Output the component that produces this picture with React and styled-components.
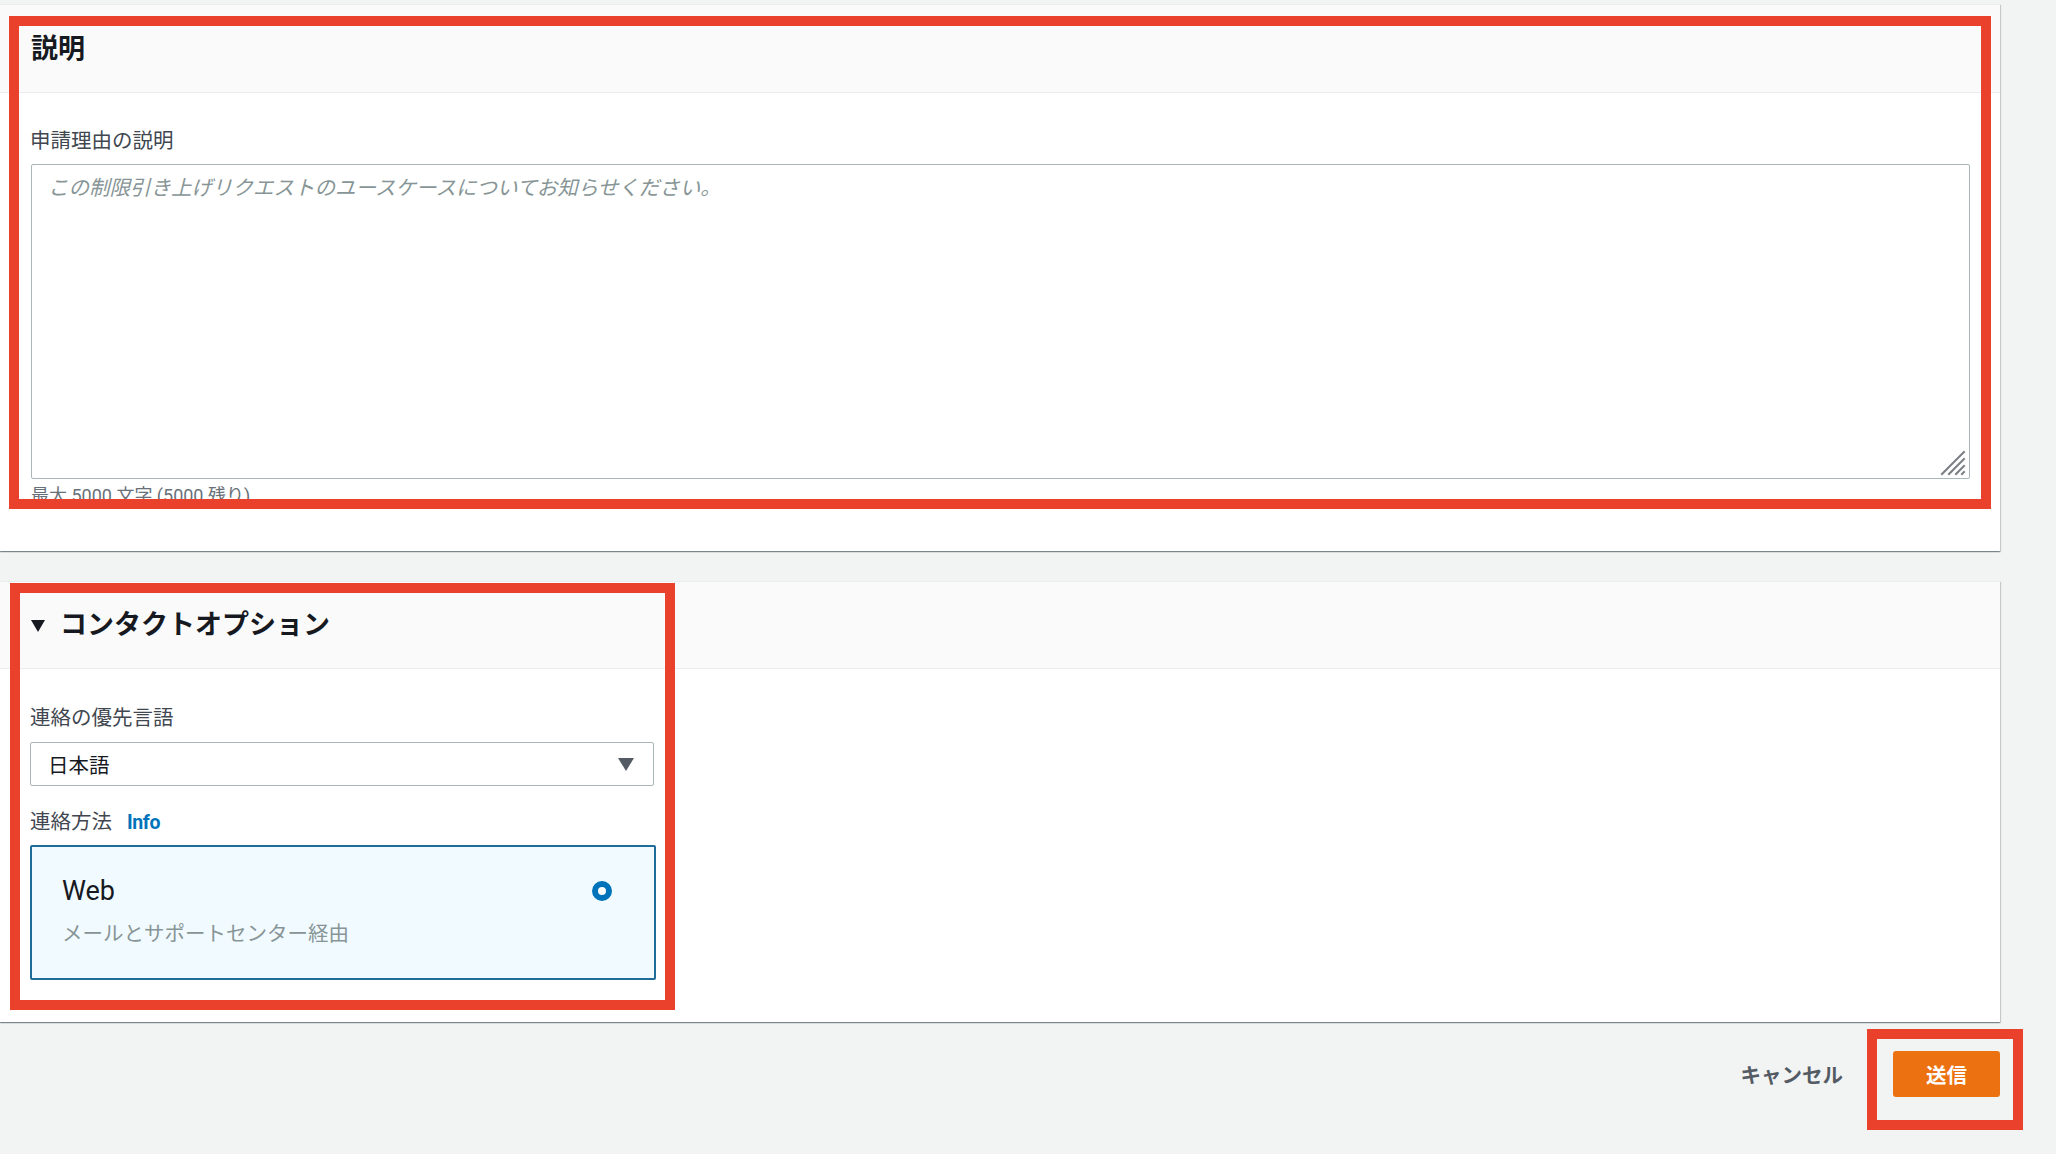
import styled, { createGlobalStyle } from 'styled-components';

const GlobalStyle = createGlobalStyle`
  html, body {
    margin: 0;
    padding: 0;
    background: #f2f3f3;
  }
  body {
    font-family: Roboto, "Noto Sans CJK JP", sans-serif;
    color: #16191f;
    -webkit-font-smoothing: antialiased;
  }
  * { box-sizing: border-box; }
`;

const Page = styled.div`
  position: relative;
  width: 2000px;
  min-height: 1154px;
  padding-top: 4px;
`;

const Card = styled.section`
  background: #fff;
  margin-top: ${p => p.gap || 0}px;
  box-shadow: 0 1px 1px 0 rgba(0, 28, 36, 0.3), 1px 1px 1px 0 rgba(0, 28, 36, 0.15),
    -1px 1px 1px 0 rgba(0, 28, 36, 0.15);
  border-top: 1px solid #eaeded;
`;

const CardHeader = styled.header`
  height: ${p => p.h}px;
  display: flex;
  align-items: center;
  gap: 15px;
  padding-left: 31px;
  background: #fafafa;
  border-bottom: 1px solid #eaeded;
`;

const Heading = styled.h2`
  margin: 0;
  font-size: 27px;
  font-weight: 700;
  line-height: 32px;
  color: #16191f;
`;

const Caret = styled.span`
  width: 0;
  height: 0;
  border-left: 7px solid transparent;
  border-right: 7px solid transparent;
  border-top: 12px solid #16191f;
  margin-top: 2px;
`;

const CardBody = styled.div`
  padding: ${p => p.pt}px 31px ${p => p.pb}px 30px;
  display: flex;
  flex-direction: column;
`;

const Label = styled.label`
  display: flex;
  align-items: baseline;
  gap: 15px;
  font-size: 20.5px;
  line-height: 26px;
  color: #414750;
  margin-bottom: ${p => p.mb}px;
`;

const InfoLink = styled.a`
  font-family: Roboto, sans-serif;
  font-size: 19.5px;
  font-weight: 700;
  color: #0073bb;
  text-decoration: none;
  letter-spacing: -0.4px;
`;

const TextAreaWrap = styled.div`
  position: relative;
  margin-left: 1px;
`;

const TextArea = styled.textarea`
  display: block;
  width: calc(100% + 1px);
  height: 315px;
  padding: 10px 16px;
  border: 1px solid #aab7b8;
  border-radius: 2px;
  font-family: Roboto, "Noto Sans CJK JP", sans-serif;
  font-size: 20.5px;
  line-height: 26px;
  color: #16191f;
  resize: none;
  outline: none;
  &::placeholder {
    color: #879596;
    font-style: italic;
  }
`;

const Grip = styled.svg`
  position: absolute;
  right: 3px;
  bottom: 3px;
  pointer-events: none;
`;

const Constraint = styled.div`
  margin-top: 6px;
  margin-left: 1px;
  font-size: 18px;
  line-height: 22px;
  color: #687078;
`;

const Select = styled.div`
  width: 624px;
  height: 44px;
  display: flex;
  align-items: center;
  justify-content: space-between;
  padding: 0 19px 0 17px;
  border: 1px solid #aab7b8;
  border-radius: 2px;
  font-size: 20.5px;
  color: #16191f;
  margin-bottom: 23px;
`;

const Tile = styled.div`
  width: 626px;
  height: 135px;
  padding: 28px 42px 0 30px;
  background: #f1faff;
  border: 2px solid #1f6c98;
  border-radius: 2px;
  display: flex;
  flex-direction: column;
  gap: 14px;
`;

const TileTop = styled.div`
  display: flex;
  align-items: center;
  justify-content: space-between;
`;

const TileTitle = styled.div`
  font-family: Roboto, sans-serif;
  font-size: 27px;
  line-height: 32px;
  color: #16191f;
`;

const TileDesc = styled.div`
  font-size: 20.5px;
  line-height: 26px;
  color: #879596;
`;

const Radio = styled.span`
  width: 20px;
  height: 20px;
  border-radius: 50%;
  border: 6px solid #0073bb;
  background: #fff;
`;

const Footer = styled.div`
  display: flex;
  justify-content: flex-end;
  align-items: center;
  gap: 50px;
  margin-top: 29px;
`;

const LinkButton = styled.button`
  background: none;
  border: none;
  padding: 0;
  font-family: "Noto Sans CJK JP", sans-serif;
  font-size: 20.5px;
  font-weight: 700;
  color: #545b64;
  cursor: pointer;
`;

const PrimaryButton = styled.button`
  width: 107px;
  height: 46px;
  background: #ec7211;
  border: none;
  border-radius: 3px;
  font-family: "Noto Sans CJK JP", sans-serif;
  font-size: 20.5px;
  font-weight: 700;
  color: #fff;
  cursor: pointer;
`;

const Annotation = styled.div`
  position: absolute;
  left: ${p => p.x}px;
  top: ${p => p.y}px;
  width: ${p => p.w}px;
  height: ${p => p.h}px;
  border: 10px solid #e9412b;
  pointer-events: none;
`;

export default function App() {
  return (
    <>
      <GlobalStyle />
      <Page>
        <Card>
          <CardHeader h={88}>
            <Heading>説明</Heading>
          </CardHeader>
          <CardBody pt={35} pb={44}>
            <Label mb={10}>申請理由の説明</Label>
            <TextAreaWrap>
              <TextArea placeholder="この制限引き上げリクエストのユースケースについてお知らせください。" />
              <Grip width="26" height="26" viewBox="0 0 26 26">
                <g stroke="#7b7f84" strokeWidth="2" strokeLinecap="square">
                  <path d="M2 24L24 2" />
                  <path d="M9 24L24 9" />
                  <path d="M16 24L24 16" />
                  <path d="M22 24L24 22" />
                </g>
              </Grip>
            </TextAreaWrap>
            <Constraint>最大 5000 文字 (5000 残り)</Constraint>
          </CardBody>
        </Card>

        <Card gap={30}>
          <CardHeader h={87}>
            <Caret />
            <Heading>コンタクトオプション</Heading>
          </CardHeader>
          <CardBody pt={36} pb={42}>
            <Label mb={11}>連絡の優先言語</Label>
            <Select>
              <span>日本語</span>
              <svg width="16" height="13" viewBox="0 0 16 13">
                <path d="M0 0h16L8 13z" fill="#545b64" />
              </svg>
            </Select>
            <Label mb={9}>
              連絡方法
              <InfoLink href="#">Info</InfoLink>
            </Label>
            <Tile>
              <TileTop>
                <TileTitle>Web</TileTitle>
                <Radio />
              </TileTop>
              <TileDesc>メールとサポートセンター経由</TileDesc>
            </Tile>
          </CardBody>
        </Card>

        <Footer>
          <LinkButton>キャンセル</LinkButton>
          <PrimaryButton>送信</PrimaryButton>
        </Footer>

        <Annotation x={9} y={16} w={1982} h={493} />
        <Annotation x={10} y={583} w={665} h={427} />
        <Annotation x={1867} y={1029} w={156} h={101} />
      </Page>
    </>
  );
}
